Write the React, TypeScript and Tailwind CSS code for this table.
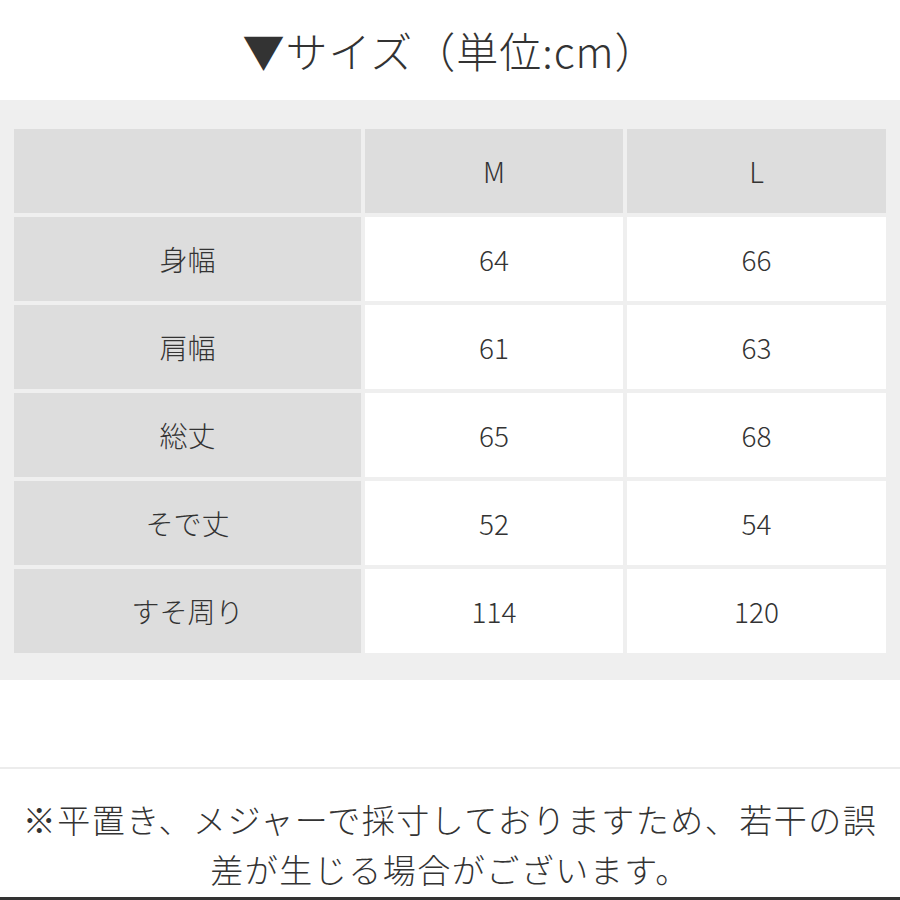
const rows = [
  { label: '身幅', m: '64', l: '66' },
  { label: '肩幅', m: '61', l: '63' },
  { label: '総丈', m: '65', l: '68' },
  { label: 'そで丈', m: '52', l: '54' },
  { label: 'すそ周り', m: '114', l: '120' },
]

export default function App() {
  return (
    <div
      className="w-[900px] h-[900px] bg-white text-[#333333] font-light flex flex-col overflow-hidden"
      style={{ fontFamily: '"Noto Sans CJK JP", "Noto Sans", sans-serif' }}
    >
      <div className="h-[100px] flex items-center justify-center text-[42px] leading-none tracking-[1px]">
        ▼サイズ（単位:cm）
      </div>

      <div className="bg-[#efefef] pt-[29px] pb-[27px] px-[14px]">
        <div className="grid grid-cols-[347px_258px_259px] auto-rows-[84px] gap-1 text-[28px]">
          <div className="bg-[#dddddd]" />
          <div className="bg-[#dddddd] flex items-center justify-center">M</div>
          <div className="bg-[#dddddd] flex items-center justify-center">L</div>
          {rows.map((r) => (
            <div key={r.label} className="contents">
              <div className="bg-[#dddddd] flex items-center justify-center">{r.label}</div>
              <div className="bg-white flex items-center justify-center">{r.m}</div>
              <div className="bg-white flex items-center justify-center">{r.l}</div>
            </div>
          ))}
        </div>
      </div>

      <div className="h-[87px]" />
      <div className="h-[2px] bg-[#ececec]" />

      <div className="flex-1 px-[14px] pt-[25px] text-center text-[33px] leading-[50px] tracking-[1.5px]">
        ※平置き、メジャーで採寸しておりますため、若干の誤差が生じる場合がございます。
      </div>
      <div className="h-[3px] bg-[#333333]" />
    </div>
  )
}
